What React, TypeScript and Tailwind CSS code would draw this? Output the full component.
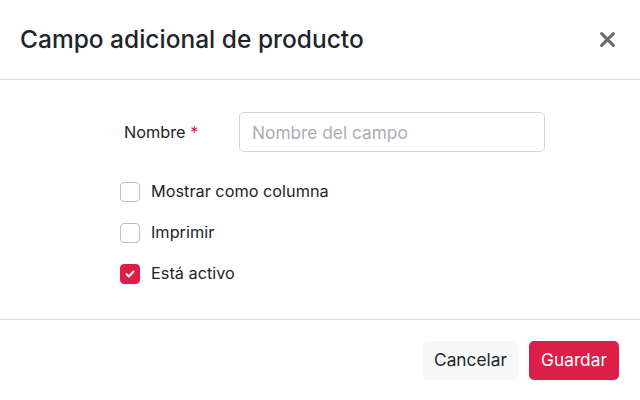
import { useState } from "react";

type Option = {
  label: string;
  checked: boolean;
};

const initialOptions: Option[] = [
  { label: "Mostrar como columna", checked: false },
  { label: "Imprimir", checked: false },
  { label: "Está activo", checked: true },
];

function CheckRow({ option, onToggle }: { option: Option; onToggle: () => void }) {
  return (
    <label className="flex h-[41px] cursor-pointer items-center gap-[11px]">
      <span
        onClick={onToggle}
        className={
          option.checked
            ? "grid h-5 w-5 place-items-center rounded-[4px] border border-[#dc1f47] bg-[#dc1f47]"
            : "grid h-5 w-5 place-items-center rounded-[4px] border border-[#b9bec4] bg-white"
        }
      >
        {option.checked && (
          <svg viewBox="0 0 12 12" className="h-3 w-3" fill="none">
            <path d="M2.6 6.3 4.9 8.5 9.4 3.6" stroke="white" strokeWidth="2" strokeLinecap="round" strokeLinejoin="round" />
          </svg>
        )}
      </span>
      <span className="text-[16.3px] text-[#212529]">{option.label}</span>
    </label>
  );
}

export default function App() {
  const [options, setOptions] = useState(initialOptions);

  const toggle = (index: number) =>
    setOptions((prev) => prev.map((o, i) => (i === index ? { ...o, checked: !o.checked } : o)));

  return (
    <div className="flex h-[400px] w-[640px] flex-col bg-white font-['Inter',sans-serif] text-[#212529]">
      <div className="flex h-[80px] shrink-0 items-center justify-between border-b border-[#dee2e6] pl-5 pr-[23px]">
        <h2 className="text-[24.5px] font-medium text-[#212529]">Campo adicional de producto</h2>
        <button className="grid h-5 w-5 place-items-center text-[#6c6c6c]">
          <svg viewBox="0 0 16 16" className="h-[17px] w-[17px]" fill="none">
            <path d="M2.5 2.5 13.5 13.5M13.5 2.5 2.5 13.5" stroke="currentColor" strokeWidth="3" strokeLinecap="round" />
          </svg>
        </button>
      </div>

      <div className="flex flex-1 flex-col pl-[120px] pt-8">
        <div className="flex items-center">
          <span className="w-[119px] pl-1 text-[16.3px]">
            Nombre <span className="text-[#dc1f47]">*</span>
          </span>
          <input
            placeholder="Nombre del campo"
            className="h-[40px] w-[306px] rounded-[5px] border border-[#ced4da] px-3 text-[17.3px] outline-none placeholder:text-[#a8aeb5]"
          />
        </div>
        <div className="mt-[19px] flex flex-col">
          {options.map((o, i) => (
            <CheckRow key={o.label} option={o} onToggle={() => toggle(i)} />
          ))}
        </div>
      </div>

      <div className="flex h-[81px] shrink-0 items-center justify-end gap-[11px] border-t border-[#dee2e6] pr-[21px]">
        <button className="h-[39px] w-[95px] rounded-[5px] bg-[#f7f8f9] text-[17.3px] text-[#212529]">Cancelar</button>
        <button className="h-[39px] w-[90px] rounded-[5px] bg-[#dc1f47] text-[17.3px] text-white">Guardar</button>
      </div>
    </div>
  );
}
